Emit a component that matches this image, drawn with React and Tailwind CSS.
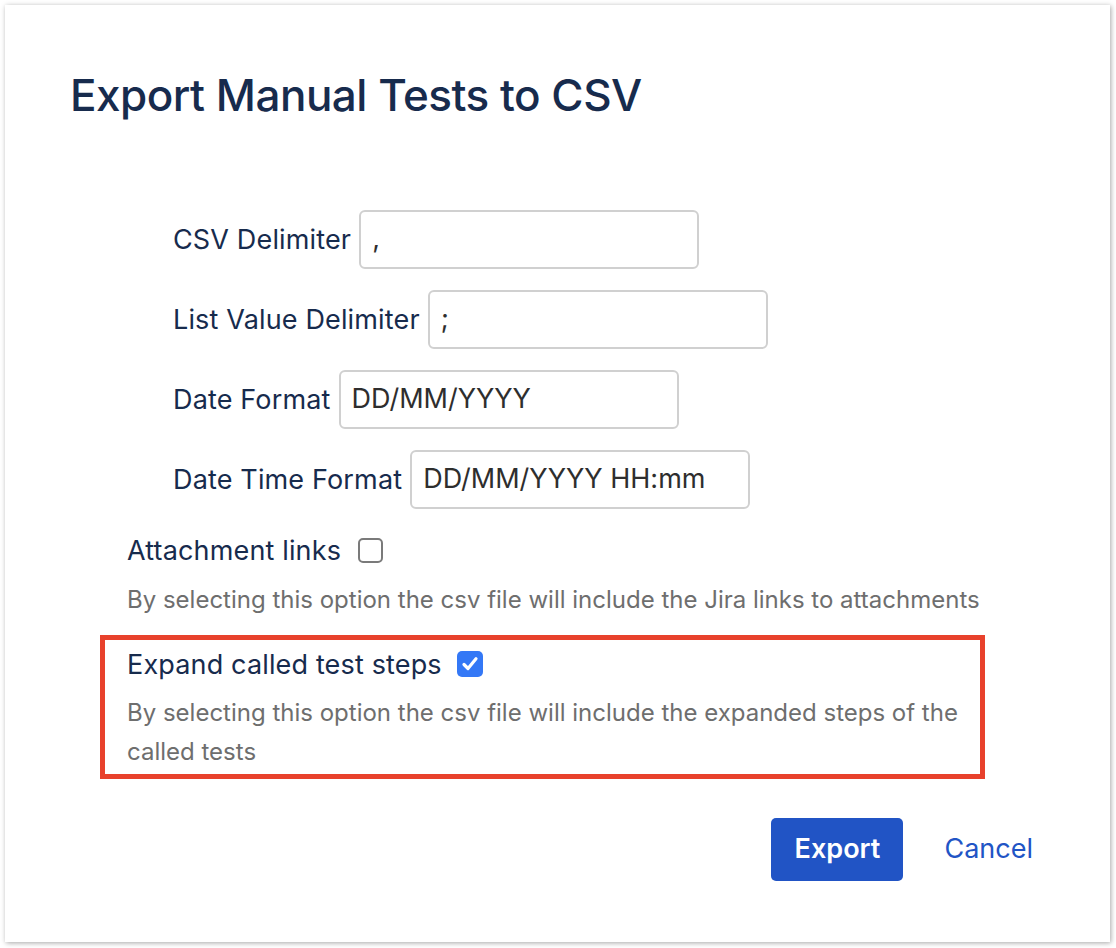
import React from "react";

const font = { fontFamily: "Inter, 'Noto Sans', sans-serif" };

function Row({ label, value }) {
  return (
    <div className="flex items-center h-[59px]">
      <span className="text-[27px] text-[#172b4d] mr-[8px] leading-none tracking-[0.15px]">{label}</span>
      <div className="w-[340px] h-[59px] border-2 border-[#d0d0d0] rounded-[6px] flex items-center px-[11px] text-[27px] text-[#2e2e2e]">
        {value}
      </div>
    </div>
  );
}

export default function App() {
  return (
    <div className="w-[1116px] h-[948px] bg-white pt-[5px] pl-[5px]" style={font}>
      <div className="w-[1105px] h-[937px] bg-white shadow-[1px_1px_5px_rgba(0,0,0,0.35)] flex flex-col">
        <h1 className="mt-[68px] ml-[65px] text-[44px] leading-none font-medium text-[#172b4d] tracking-[-0.5px]">
          Export Manual Tests to CSV
        </h1>
        <div className="mt-[93px] ml-[168px] flex flex-col gap-[21px]">
          <Row label="CSV Delimiter" value="," />
          <Row label="List Value Delimiter" value=";" />
          <Row label="Date Format" value="DD/MM/YYYY" />
          <Row label="Date Time Format" value="DD/MM/YYYY HH:mm" />
        </div>
        <div className="ml-[122px] mt-[26px] h-[30px] flex items-center">
          <span className="text-[27px] text-[#172b4d] leading-none tracking-[0.15px]">Attachment links</span>
          <span className="ml-[17px] w-[25px] h-[25px] rounded-[5px] border-2 border-[#7a7a7a] bg-white"></span>
        </div>
        <p className="ml-[122px] mt-[15px] text-[24px] leading-[40px] text-[#6e6e6e] whitespace-nowrap">
          By selecting this option the csv file will include the Jira links to attachments
        </p>
        <div className="ml-[95px] mt-[15px] w-[885px] h-[144px] border-[5px] border-[#e8412c] pl-[22px] pt-[9px]">
          <div className="flex items-center h-[30px]">
            <span className="text-[27px] text-[#172b4d] leading-none tracking-[0.15px]">Expand called test steps</span>
            <span className="ml-[15px] w-[26px] h-[26px] rounded-[5px] bg-[#3478f6] flex items-center justify-center">
              <svg width="20" height="20" viewBox="0 0 20 20" fill="none">
                <path d="M4 10.5 L8 14.5 L16 4.8" stroke="white" strokeWidth="3.2" strokeLinecap="round" strokeLinejoin="round" />
              </svg>
            </span>
          </div>
          <p className="mt-[14px] text-[24px] leading-[39px] text-[#6e6e6e] whitespace-nowrap">
            By selecting this option the csv file will include the expanded steps of the
            <br />
            called tests
          </p>
        </div>
        <div className="flex justify-end items-center mt-[39px] mr-[77px]">
          <button className="w-[132px] h-[63px] rounded-[5px] bg-[#2154c5] text-white text-[27px] font-semibold">
            Export
          </button>
          <button className="ml-[41px] text-[27px] text-[#2154c5]">Cancel</button>
        </div>
      </div>
    </div>
  );
}
